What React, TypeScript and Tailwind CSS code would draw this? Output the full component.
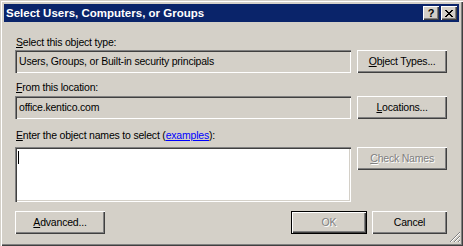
import React from 'react';

const raised =
  'shadow-[inset_1px_1px_0_#ffffff,inset_-1px_-1px_0_#404040,inset_-2px_-2px_0_#808080]';
const sunken =
  'shadow-[inset_1px_1px_0_#808080,inset_2px_2px_0_#404040,inset_-1px_-1px_0_#ffffff,inset_-2px_-2px_0_#d4d0c8]';

function Btn({ children, disabled, size = 'w-[90px] h-[23px]' }: any) {
  return (
    <div
      className={`flex items-center justify-center bg-[#d4d0c8] ${size} ${raised} ${
        disabled ? 'text-[#808080] [text-shadow:1px_1px_0_#ffffff]' : 'text-black'
      }`}
    >
      {children}
    </div>
  );
}

function CaptionBtn({ children }: any) {
  return (
    <div className={`flex h-[14px] w-[16px] items-center justify-center bg-[#d4d0c8] ${raised}`}>
      {children}
    </div>
  );
}

export default function App() {
  return (
    <div className="flex h-[246px] w-[463px] flex-col bg-[#d4d0c8] p-[4px] font-['Liberation_Sans',Arial,sans-serif] text-[10.5px] leading-[13px] tracking-[-0.2px] text-black shadow-[inset_1px_1px_0_#d4d0c8,inset_2px_2px_0_#ffffff,inset_-1px_-1px_0_#404040,inset_-2px_-2px_0_#808080]">
      {/* title bar */}
      <div className="flex h-[18px] items-center justify-between bg-[#0a246a] pl-[2px] pr-[2px]">
        <span className="text-[11.5px] font-bold tracking-normal text-white">Select Users, Computers, or Groups</span>
        <div className="flex gap-[2px]">
          <CaptionBtn>
            <span className="mt-[1px] text-[11px] font-bold leading-none tracking-normal text-black">?</span>
          </CaptionBtn>
          <CaptionBtn>
            <svg width="8" height="7" viewBox="0 0 8 7">
              <path d="M0 0h2v1h-2zM6 0h2v1h-2zM1 1h2v1h-2zM5 1h2v1h-2zM2 2h4v1h-4zM3 3h2v1h-2zM2 4h4v1h-4zM1 5h2v1h-2zM5 5h2v1h-2zM0 6h2v1h-2zM6 6h2v1h-2z" fill="#000" />
            </svg>
          </CaptionBtn>
        </div>
      </div>

      {/* body */}
      <div className="relative flex flex-1 flex-col pl-[11px] pr-[12px]">
        <div className="mt-[14px] h-[14px] pl-[1px]">
          <span className="underline">S</span>elect this object type:
        </div>
        <div className="flex gap-[6px]">
          <div className={`flex h-[23px] w-[337px] items-center pl-[4px] ${sunken}`}>
            Users, Groups, or Built-in security principals
          </div>
          <Btn>
            <span className="underline">O</span>bject Types...
          </Btn>
        </div>

        <div className="mt-[8px] h-[15px] pl-[1px]">
          <span className="underline">F</span>rom this location:
        </div>
        <div className="flex gap-[6px]">
          <div className={`flex h-[23px] w-[337px] items-center pl-[4px] ${sunken}`}>office.kentico.com</div>
          <Btn>
            <span className="underline">L</span>ocations...
          </Btn>
        </div>

        <div className="mt-[10px] h-[18px] pl-[1px]">
          <span className="underline">E</span>nter the object names to select (
          <span className="text-[#0000ff] underline">examples</span>):
        </div>
        <div className="flex gap-[6px]">
          <div className={`h-[55px] w-[337px] bg-white pl-[3px] pt-[4px] ${sunken}`}>
            <div className="h-[13px] w-[1px] bg-black" />
          </div>
          <Btn disabled>
            <span className="underline">C</span>heck Names
          </Btn>
        </div>

        <div className="mt-[9px] flex">
          <Btn>
            <span className="underline">A</span>dvanced...
          </Btn>
          <div className="flex-1" />
          <div className="flex h-[23px] w-[76px] border border-black">
            <Btn disabled size="h-full w-full">
              OK
            </Btn>
          </div>
          <div className="ml-[5px]">
            <Btn size="w-[75px] h-[23px]">Cancel</Btn>
          </div>
        </div>

        <svg className="absolute bottom-[-1px] right-[-2px]" width="12" height="12" viewBox="0 0 12 12">
          <path d="M11 1L1 11M11 5L5 11M11 9L9 11" stroke="#808080" strokeWidth="1" />
          <path d="M11 2L2 11M11 6L6 11M11 10L10 11" stroke="#ffffff" strokeWidth="1" />
        </svg>
      </div>
    </div>
  );
}
